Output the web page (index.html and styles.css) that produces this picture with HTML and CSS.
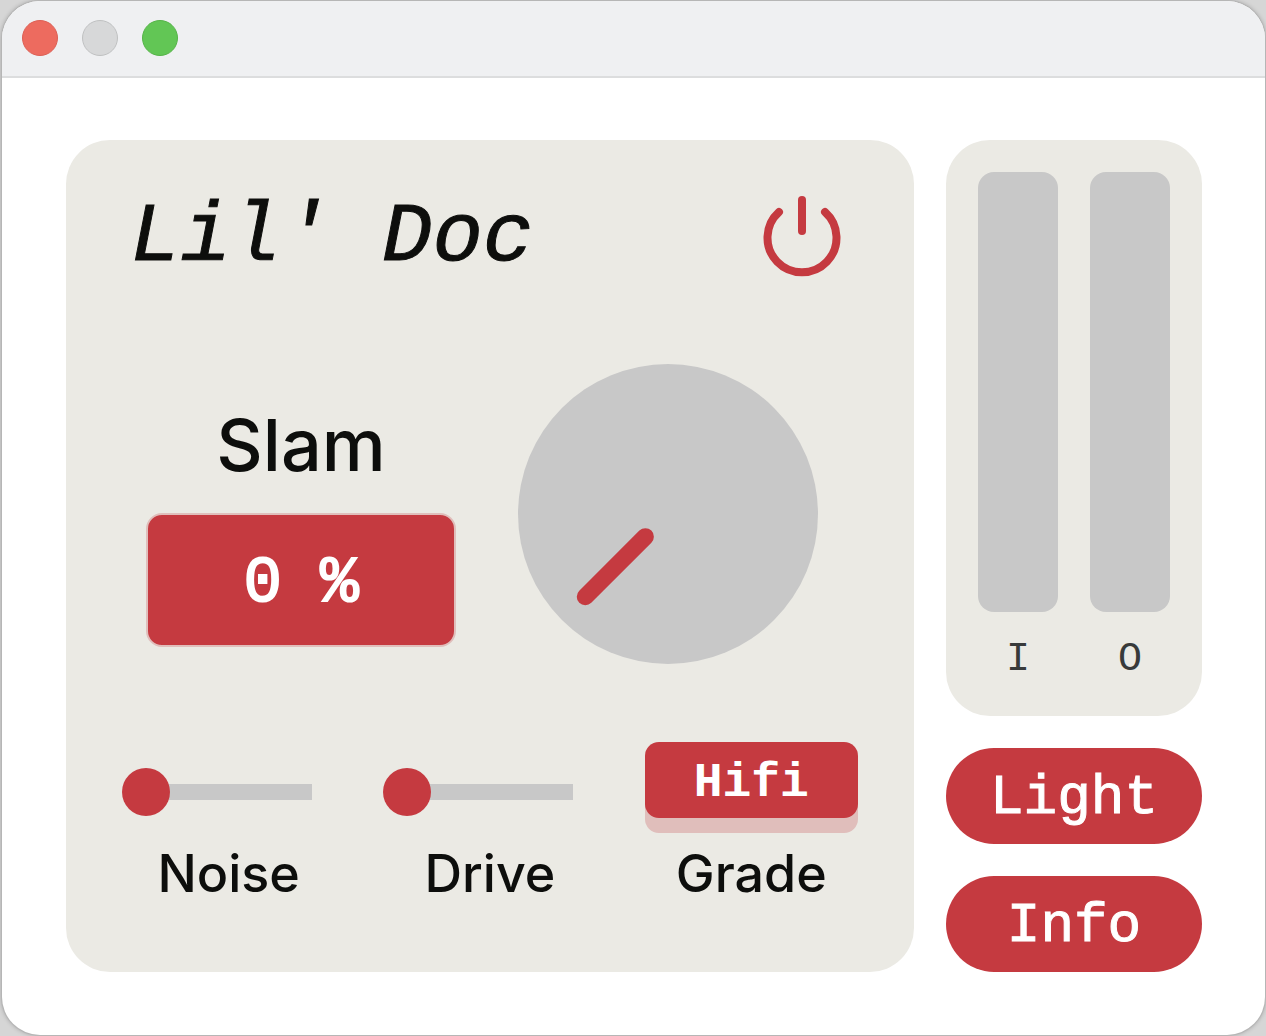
FILE: index.html
```html
<!DOCTYPE html>
<html lang="en">
<head>
  <meta charset="UTF-8">
  <meta name="viewport" content="width=device-width, initial-scale=1.0">
  <title>Lil' Doc</title>
  <link rel="stylesheet" href="styles.css">
</head>
<body>
  <div class="window">
    <div class="titlebar">
      <button type="button" class="light close" aria-label="Close"></button>
      <button type="button" class="light minimize" aria-label="Minimize"></button>
      <button type="button" class="light maximize" aria-label="Zoom"></button>
    </div>

    <main class="plugin">
      <section class="panel controls">
        <header class="header">
          <h1>Lil' Doc</h1>
          <button type="button" class="power" aria-label="Power">
            <svg viewBox="0 0 80 84" width="80" height="84">
              <path d="M17 16 A34.5 34.5 0 1 0 63 16" />
              <path d="M40 4 V35" />
            </svg>
          </button>
        </header>

        <div class="slam">
          <div class="slam-value">
            <label for="slamText">Slam</label>
            <input type="text" id="slamText" value="0 %" readonly>
          </div>
          <div class="knob">
            <svg viewBox="0 0 300 300">
              <circle cx="150" cy="150" r="150" />
              <line id="needle" x1="150" y1="118" x2="150" y2="33" transform="rotate(-135 150 150)" />
            </svg>
            <input type="range" id="slam" min="0" max="100" value="0" aria-label="Slam" oninput="updateSlam(this.value)">
          </div>
        </div>

        <div class="bottom-row">
          <div class="cell">
            <div class="control"><input type="range" id="noise" min="0" max="100" value="0"></div>
            <label for="noise">Noise</label>
          </div>
          <div class="cell">
            <div class="control"><input type="range" id="drive" min="0" max="100" value="0"></div>
            <label for="drive">Drive</label>
          </div>
          <div class="cell">
            <div class="control"><button type="button" id="grade" class="grade">Hifi</button></div>
            <label for="grade">Grade</label>
          </div>
        </div>
      </section>

      <aside class="side">
        <div class="panel meters">
          <div class="meter"><div class="bar"></div><span>I</span></div>
          <div class="meter"><div class="bar"></div><span>O</span></div>
        </div>
        <button type="button" class="pill">Light</button>
        <button type="button" class="pill">Info</button>
      </aside>
    </main>
  </div>
  <script>
    // knob sweeps 270 degrees, starting bottom left
    function updateSlam(value) {
      var angle = -135 + value * 2.7;
      document.getElementById("needle").setAttribute("transform", "rotate(" + angle + " 150 150)");
      document.getElementById("slamText").value = value + " %";
    }
  </script>
</body>
</html>
```

FILE: styles.css
```css
:root {
  --red: #c53a40;
  --red-soft: #e0bebb;
  --panel: #ebeae4;
  --grey: #c8c8c8;
  --ink: #0d0e0c;
  --mono: "Liberation Mono", "Courier New", monospace;
  --sans: Inter, "Liberation Sans", sans-serif;
}
* {
  box-sizing: border-box;
}
body {
  margin: 0;
  min-height: 100vh;
  display: flex;
  padding: 1px 1px 1px 2px;
  background: #d6d6d6;
  color: var(--ink);
  font-family: var(--sans);
}
button {
  border: none;
  padding: 0;
  cursor: pointer;
}
.window {
  flex: 1;
  background: #fff;
  border-radius: 38px;
  box-shadow: 0 0 0 1px #b6b6b6, 0 0 5px #0005;
  overflow: hidden;
}
.titlebar {
  display: flex;
  align-items: center;
  gap: 24px;
  height: 77px;
  padding: 0 20px 2px;
  background: #eff0f2;
  border-bottom: 2px solid #dcddde;
}
.light {
  width: 36px;
  height: 36px;
  border-radius: 50%;
}
.close {
  background: #ed6b5f;
  border: 1px solid #dc5f54;
}
.minimize {
  background: #d7d8d9;
  border: 1px solid #bfc0c1;
}
.maximize {
  background: #62c655;
  border: 1px solid #55b348;
}

.plugin {
  display: flex;
  gap: 32px;
  padding: 62px 63px 62px 64px;
}
.panel {
  background: var(--panel);
  border-radius: 44px;
}
.controls {
  flex: 1;
  padding: 56px 56px 66px;
}
.header {
  display: flex;
  justify-content: space-between;
  align-items: center;
  padding: 0 16px 0 8px;
}
h1 {
  margin: 0;
  font: italic 400 84px/84px var(--mono);
  -webkit-text-stroke: 1px var(--ink);
}
.power {
  height: 84px;
  background: none;
}
.power svg {
  display: block;
  fill: none;
  stroke: var(--red);
  stroke-width: 8;
  stroke-linecap: round;
}

.slam {
  display: flex;
  justify-content: space-between;
  align-items: center;
  margin-top: 84px;
  padding: 0 40px 0 24px;
}
.slam-value {
  display: flex;
  flex-direction: column;
  gap: 24px;
  width: 310px;
  padding-top: 20px;
  text-align: center;
}
.slam-value label {
  font-size: 72px;
  font-weight: 500;
  line-height: 88px;
}
.slam-value input {
  width: 100%;
  height: 134px;
  padding: 8px 0 0;
  border: 2px solid var(--red-soft);
  border-radius: 16px;
  background: var(--red);
  color: #fff;
  font: 400 64px var(--mono);
  -webkit-text-stroke: 2px #fff;
  text-align: center;
}
.knob {
  position: relative;
  width: 300px;
  height: 300px;
}
.knob svg {
  display: block;
}
.knob circle {
  fill: var(--grey);
}
.knob line {
  stroke: var(--red);
  stroke-width: 17;
  stroke-linecap: round;
}
/* invisible range on top of the drawing takes the input */
.knob input {
  position: absolute;
  inset: 0;
  width: 100%;
  height: 100%;
  margin: 0;
  opacity: 0;
  cursor: pointer;
}

.bottom-row {
  display: grid;
  grid-template-columns: repeat(3, 1fr);
  gap: 48px;
  margin-top: 78px;
}
.cell {
  text-align: center;
}
.control {
  display: flex;
  align-items: center;
  height: 100px;
}
.cell label {
  display: block;
  font-size: 52px;
  font-weight: 500;
  line-height: 64px;
}
.control input {
  appearance: none;
  width: 190px;
  height: 48px;
  margin: 0;
  background: linear-gradient(var(--grey), var(--grey)) right center / calc(100% - 8px) 16px no-repeat;
  cursor: pointer;
}
.control input::-webkit-slider-thumb {
  appearance: none;
  width: 48px;
  height: 48px;
  border-radius: 50%;
  background: var(--red);
}
.grade {
  align-self: flex-start;
  width: 100%;
  height: 76px;
  padding-top: 6px;
  border-radius: 14px;
  background: var(--red);
  box-shadow: 0 15px 0 var(--red-soft);
  color: #fff;
  font: 700 48px var(--mono);
}

.side {
  display: flex;
  flex-direction: column;
  gap: 32px;
  width: 256px;
}
.meters {
  flex: 1;
  display: flex;
  gap: 32px;
  padding: 32px;
}
.meter {
  flex: 1;
  display: flex;
  flex-direction: column;
  gap: 24px;
  text-align: center;
  color: #383a3a;
  font: 40px/48px var(--mono);
}
.bar {
  flex: 1;
  border-radius: 16px;
  background: var(--grey);
}
.pill {
  height: 96px;
  padding-top: 4px;
  border-radius: 48px;
  background: var(--red);
  color: #fff;
  font: 400 56px var(--mono);
  -webkit-text-stroke: 1px #fff;
}
```
